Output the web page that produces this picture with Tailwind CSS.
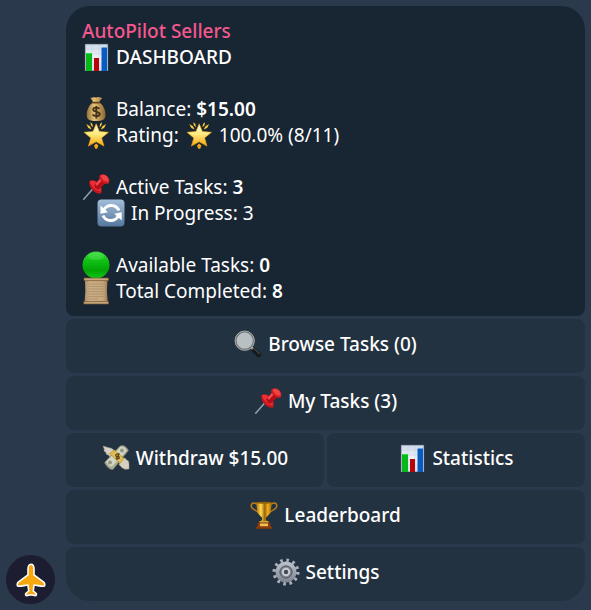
<!DOCTYPE html>
<html lang="en">
<head>
    <meta charset="utf-8">
    <title>AutoPilot Sellers</title>
    <meta name="viewport" content="width=device-width, initial-scale=1.0">
    <script src="https://cdn.jsdelivr.net/npm/@tailwindcss/browser@4"></script>
</head>
<body class="bg-[#2a3a4c] min-h-screen font-['Noto_Sans',sans-serif] text-[19px] text-white">
    <!-- Icon sprite -->
    <svg class="absolute size-0" aria-hidden="true">
        <defs>
            <linearGradient id="paper" x2="0" y2="1"><stop stop-color="#cfd9e8"/><stop offset=".5" stop-color="#eef3f8"/><stop offset="1" stop-color="#d8e1ec"/></linearGradient>
            <linearGradient id="gold" x2="0" y2="1"><stop stop-color="#fffbd0"/><stop offset=".45" stop-color="#ffeb82"/><stop offset="1" stop-color="#f9a50c"/></linearGradient>
            <linearGradient id="sack" x2="1" y2="0"><stop stop-color="#94703a"/><stop offset=".4" stop-color="#e5c277"/><stop offset="1" stop-color="#8c662f"/></linearGradient>
            <linearGradient id="blue" x2="0" y2="1"><stop stop-color="#a3bdd8"/><stop offset="1" stop-color="#55779e"/></linearGradient>
            <linearGradient id="green" x2="0" y2="1"><stop stop-color="#3fdc40"/><stop offset=".35" stop-color="#10c014"/><stop offset=".7" stop-color="#02a406"/><stop offset="1" stop-color="#11c916"/></linearGradient>
            <linearGradient id="scroll" x2="1" y2="0"><stop stop-color="#a88b64"/><stop offset=".2" stop-color="#c9ae86"/><stop offset=".8" stop-color="#c5a77d"/><stop offset="1" stop-color="#98774e"/></linearGradient>
            <linearGradient id="cup" x2="1" y2="0"><stop stop-color="#b87908"/><stop offset=".3" stop-color="#ffdc57"/><stop offset=".55" stop-color="#9c6204"/><stop offset=".75" stop-color="#eeb01d"/><stop offset="1" stop-color="#a86b06"/></linearGradient>
            <linearGradient id="steel" x2="0" y2="1"><stop stop-color="#b8bec7"/><stop offset="1" stop-color="#838a94"/></linearGradient>
        </defs>

        <symbol id="chart" viewBox="0 0 28 28">
            <path fill="url(#paper)" stroke="#aebccb" stroke-width=".8" d="M3.400 1.400h22.200v26.200H3.400z"/>
            <path stroke="#c3d0df" stroke-width=".5" d="M4 6h21M4 11h21M4 16h21M4 21h21M10 2v25M17 2v25"/>
            <path fill="#06b91a" d="M4 10h6v18H4z"/>
            <path fill="#b90509" d="M12 15h5v13h-5z"/>
            <path fill="#075cc4" d="M19.500 4.500h5.500V28h-5.500z"/>
            <path fill="#1ce035" d="M4 10h6v1H4z"/>
        </symbol>

        <symbol id="bag" viewBox="0 0 28 28">
            <path fill="url(#sack)" d="M8 2.500c2 1 3-.8 5-.2 2 .7 3-.8 4.500 0l3 .7c-1.800 1.300-2.800 3-3.300 4.500 3.800 2 6.500 7.500 6.300 12.500 0 4.500-3 6-9.500 6s-9.300-1.500-9.300-6C4.700 15 7.300 9.500 11 7.500 10.600 5.800 9.500 4 8 2.500z"/>
            <path stroke="#6b4313" stroke-width="1.600" stroke-linecap="round" d="M10.600 7.600h7"/>
            <path fill="none" stroke="#41301a" stroke-width="1.800" d="M17.500 13.800c-1-1.600-6.300-1.900-6.300.8 0 3 6.600 1.500 6.600 4.500 0 2.700-6 2.500-7.100.4M14.300 11v12.500"/>
        </symbol>

        <symbol id="star" viewBox="0 0 28 28">
            <path fill="url(#gold)" stroke="#e8a51a" stroke-width=".6" stroke-linejoin="round" d="M14.200 2.800l3.200 7.600 9.100.9-6.900 5.600 2.400 8.200-7.800-4.300-7.800 4.300 2.400-8.200L2 11.300l9-.9z"/>
            <path fill="#fccb38" d="M4.300 3l3.700 2.200 1.600 3.300-3.300-1.400zM8.300 1.300l2 1.500.7 3.400-2-1.800zM24.100 3l-3.700 2.200-1.600 3.300 3.300-1.400zM20.100 1.300l-2 1.500-.7 3.400 2-1.800z"/>
            <path fill="#f5a616" d="M14.200 22.500l2.200 2-1.200 3.300h-2L12 24.500z"/>
        </symbol>

        <symbol id="pin" viewBox="0 0 28 28">
            <path stroke="#8ea0b0" stroke-width="1.500" stroke-linecap="round" d="M1.700 26.300L12 14.500"/>
            <path fill="#c9151d" d="M7.500 8c3-1.600 5.800-1 8.700 1.800 3 3 4.500 7 2.800 10.800-3 .5-6.300-1.300-8.600-3.700C8 14.500 6.800 11 7.500 8z"/>
            <path fill="#eb3035" d="M8 8c3-1 6 .2 8.300 2.800 2.200 2.500 3 5.500 2.300 7.600-2.600-.4-5-1.800-7-4C9.300 12.200 8 10 8 8z"/>
            <path fill="#b20f18" d="M12.300 12.200L18.200 5l5.300 5-6.500 6.500c-2 .3-4.700-2-4.700-4.300z"/>
            <path fill="#f2494a" d="M13.500 11L18.600 5l1.900 1.700-5.600 6.300z"/>
            <path fill="#d21b23" d="M17.500 2.500c2.500-2.300 5.500-1.300 7.600.7 2.200 2.200 3 5 1.300 7.500-2.500.6-5-.7-6.900-2.500-1.800-1.800-2.700-3.900-2-5.700z"/>
            <path fill="#f04143" d="M19 2.300c2-1.300 4.400-.5 6 1.200 1.500 1.600 2.200 3.500 1.500 5.200-2 .2-4-.6-5.600-2.200C19.400 5 18.600 3.600 19 2.300z"/>
        </symbol>

        <symbol id="refresh" viewBox="0 0 28 28">
            <rect x=".5" y=".5" width="27" height="27" rx="4" fill="url(#blue)"/>
            <path fill="none" stroke="#fff" stroke-width="3" d="M22 11.500A8.500 8.500 0 0 0 7 10.500M6 16.500a8.500 8.500 0 0 0 15 1"/>
            <path fill="#fff" d="M3.500 6.500v8.300l7.500-1.600zM24.700 21.500v-8.300l-7.500 1.600z"/>
        </symbol>

        <symbol id="circle" viewBox="0 0 28 28">
            <circle cx="14" cy="14" r="13.500" fill="url(#green)"/>
            <ellipse cx="14" cy="5.500" rx="8" ry="3.500" fill="#8cff8c" opacity=".2"/>
        </symbol>

        <symbol id="paperroll" viewBox="0 0 28 28">
            <path fill="url(#scroll)" d="M3 3h22.500l-.6 11 .9 11H2.600l.7-11z"/>
            <path stroke="#a78860" stroke-width=".6" d="M6 7h16M6 9.500h16M6 12h16M6 14.500h16M6 17h16M6 19.500h16M6 22h10"/>
            <path fill="#c7a87c" stroke="#77562f" stroke-width=".7" d="M2 1h24.500v2.600H2zM1.800 24.500H26.500V27H1.800z"/>
        </symbol>

        <symbol id="magnifier" viewBox="0 0 28 28">
            <path stroke="#17191b" stroke-width="4.600" stroke-linecap="round" d="M19.500 19.800l5.400 5.200"/>
            <path stroke="#5d6265" stroke-width="1" stroke-linecap="round" d="M20.500 19l5 4.800"/>
            <path stroke="#8b8f90" stroke-width="2.500" d="M16.500 16.500l2.500 2.500"/>
            <circle cx="10.700" cy="10.700" r="9" fill="#b9c0c3" stroke="#6d7375" stroke-width="1.800"/>
            <circle cx="10.700" cy="10.700" r="9.700" fill="none" stroke="#d4d5d0" stroke-width=".6"/>
        </symbol>

        <symbol id="money" viewBox="0 0 28 28">
            <path fill="#d5d0c2" stroke="#9e998a" stroke-width=".5" d="M1 2l5 1.500 4 1 4 4-3 5-3-.5-1.500-2-2-.5-.5-2-2-1.500.3-2zM27 25l-4 .3-3-1.500-3-3.300 3-6 3-.5 1.500 2 2 1 .5 3z"/>
            <path fill="#a7ab94" stroke="#777a67" stroke-width=".6" d="M2.500 18.500L18 2c3-1.500 6 0 8.500 4.500L11 25.500c-3 .5-6.500-2.500-8.500-7z"/>
            <path fill="#d3d6c4" d="M4 17.500L18.500 3c2.500-1 4.500.5 6.500 3.500L10 22.500c-2.500 0-4.500-2-6-5z"/>
            <circle cx="20" cy="6.500" r="2" fill="#92987f"/>
            <circle cx="8" cy="18.500" r="2" fill="#92987f"/>
            <path fill="#e9bb3c" stroke="#a97d20" stroke-width=".5" d="M7.500 9.500l5-3.500 9.500 8.500-4 5z"/>
            <path fill="#c9bd8d" d="M9.500 10l3.500-2.300 6.800 6.300-2.800 3.400z"/>
            <path fill="#e9bb3c" d="M11 10l2.500-1.300 5 4.800-2.100 2.500z"/>
            <path fill="none" stroke="#594718" stroke-width="1.300" d="M16.500 10.300c-1.300-1-3.300.2-2.600 1.500.7 1.200 2.900-.2 3.400 1.300.4 1.500-1.900 2.300-2.900 1M17.400 9.400l-3.400 6"/>
        </symbol>

        <symbol id="trophy" viewBox="0 0 28 28">
            <path fill="none" stroke="#b87c17" stroke-width="1.500" d="M8 4C3.500-.2.300 2.800 1.500 6c1 3 5 2.500 7.500 6.500M20 4c4.500-4.200 7.700-1.200 6.500 2-1 3-5 2.500-7.500 6.500"/>
            <path fill="url(#cup)" d="M6.500 1.500h15c.2 7-1.300 12-5 14.500-1 1-1 3 .5 4.500h-6c1.500-1.500 1.500-3.500.5-4.500-3.700-2.500-5.200-7.500-5-14.500z"/>
            <ellipse cx="14" cy="1.700" rx="7.600" ry="1" fill="#94600b"/>
            <path fill="#8d3b09" d="M8 21.500h12l.8 4.500H22v1.700H6V26h1.200z"/>
            <path fill="#f1c25a" d="M10 22.500h8v2.700h-8z"/>
            <path fill="#e4a62a" d="M9.500 20h9v1.500h-9z"/>
        </symbol>

        <symbol id="gear" viewBox="0 0 28 28">
            <circle cx="14" cy="14" r="11.800" fill="none" stroke="#aab1bb" stroke-width="3.400" stroke-dasharray="2.600 3.580"/>
            <circle cx="14" cy="14" r="8.500" fill="#656b74" stroke="url(#steel)" stroke-width="4"/>
            <circle cx="14" cy="14" r="6" fill="#7f858e" stroke="#575d65" stroke-width="1"/>
            <circle cx="14" cy="14" r="3.200" fill="#424951" stroke="#c8cdd5" stroke-width="2"/>
        </symbol>

        <symbol id="plane" viewBox="0 0 30 34">
            <path fill="#f8a70d" stroke="#fff" stroke-width="1.600" stroke-linejoin="round" d="M15 1.200c2 0 3 2.300 3 4.800v5.800l9.700 7.400c1.400 1.100 1.500 4 .3 4.100-3.500.2-7-1.200-10-1.300l-.7 6 2.500 2c1.200 1 .7 2.600-.3 2.600L15 31.800l-4.500.8c-1 0-1.500-1.600-.3-2.600l2.500-2-.7-6c-3 .1-6.500 1.500-10 1.300-1.200-.1-1.100-3 .3-4.100l9.700-7.400V6c0-2.500 1-4.800 3-4.800z"/>
        </symbol>
    </svg>

    <main class="flex items-end gap-[11px] px-1.5 pt-1.5 pb-[9px]">
        <!-- Bot avatar -->
        <div class="flex size-[49px] shrink-0 items-center justify-center rounded-full bg-[#1c1d30] -mb-[3px]">
            <svg class="h-[34px] w-[30px]" role="img" aria-label="AutoPilot"><use href="#plane"/></svg>
        </div>

        <div class="grid min-w-0 flex-1 gap-[3px]">
            <!-- Message -->
            <section class="rounded-t-3xl rounded-b-lg bg-[#182533] px-4 py-3 leading-[26px]">
                <h1 class="font-medium text-[#f5588e]">AutoPilot Sellers</h1>
                <h2 class="flex h-[26px] items-center gap-1.5 font-medium"><svg class="size-7"><use href="#chart"/></svg>DASHBOARD</h2>

                <div class="mt-[26px]">
                    <p class="flex h-[26px] items-center gap-1.5"><svg class="size-7"><use href="#bag"/></svg><span>Balance: <b class="font-semibold">$15.00</b></span></p>
                    <p class="flex h-[26px] items-center gap-1.5"><svg class="size-7"><use href="#star"/></svg>Rating: <svg class="size-7"><use href="#star"/></svg>100.0% (8/11)</p>
                </div>

                <div class="mt-[26px]">
                    <p class="flex h-[26px] items-center gap-1.5"><svg class="size-7"><use href="#pin"/></svg><span>Active Tasks: <b class="font-semibold">3</b></span></p>
                    <p class="flex h-[26px] items-center gap-1.5 pl-[15px]"><svg class="size-7"><use href="#refresh"/></svg>In Progress: 3</p>
                </div>

                <div class="mt-[26px]">
                    <p class="flex h-[26px] items-center gap-1.5"><svg class="size-7"><use href="#circle"/></svg><span>Available Tasks: <b class="font-semibold">0</b></span></p>
                    <p class="flex h-[26px] items-center gap-1.5"><svg class="size-7"><use href="#paperroll"/></svg><span>Total Completed: <b class="font-semibold">8</b></span></p>
                </div>
            </section>

            <!-- Inline keyboard -->
            <button type="button" class="flex h-[54px] items-center justify-center gap-1.5 rounded-lg bg-[#233240] pb-1 font-medium hover:bg-[#2b3c4c]"><svg class="size-7"><use href="#magnifier"/></svg>Browse Tasks (0)</button>
            <button type="button" class="flex h-[54px] items-center justify-center gap-1.5 rounded-lg bg-[#233240] pb-1 font-medium hover:bg-[#2b3c4c]"><svg class="size-7"><use href="#pin"/></svg>My Tasks (3)</button>
            <div class="grid grid-cols-2 gap-[3px]">
                <button type="button" class="flex h-[54px] items-center justify-center gap-1.5 rounded-lg bg-[#233240] pb-1 font-medium hover:bg-[#2b3c4c]"><svg class="size-7"><use href="#money"/></svg>Withdraw $15.00</button>
                <button type="button" class="flex h-[54px] items-center justify-center gap-1.5 rounded-lg bg-[#233240] pb-1 font-medium hover:bg-[#2b3c4c]"><svg class="size-7"><use href="#chart"/></svg>Statistics</button>
            </div>
            <button type="button" class="flex h-[54px] items-center justify-center gap-1.5 rounded-lg bg-[#233240] pb-1 font-medium hover:bg-[#2b3c4c]"><svg class="size-7"><use href="#trophy"/></svg>Leaderboard</button>
            <button type="button" class="flex h-[54px] items-center justify-center gap-1.5 rounded-t-lg rounded-b-3xl bg-[#233240] pb-1 font-medium hover:bg-[#2b3c4c]"><svg class="size-7"><use href="#gear"/></svg>Settings</button>
        </div>
    </main>
</body>
</html>
